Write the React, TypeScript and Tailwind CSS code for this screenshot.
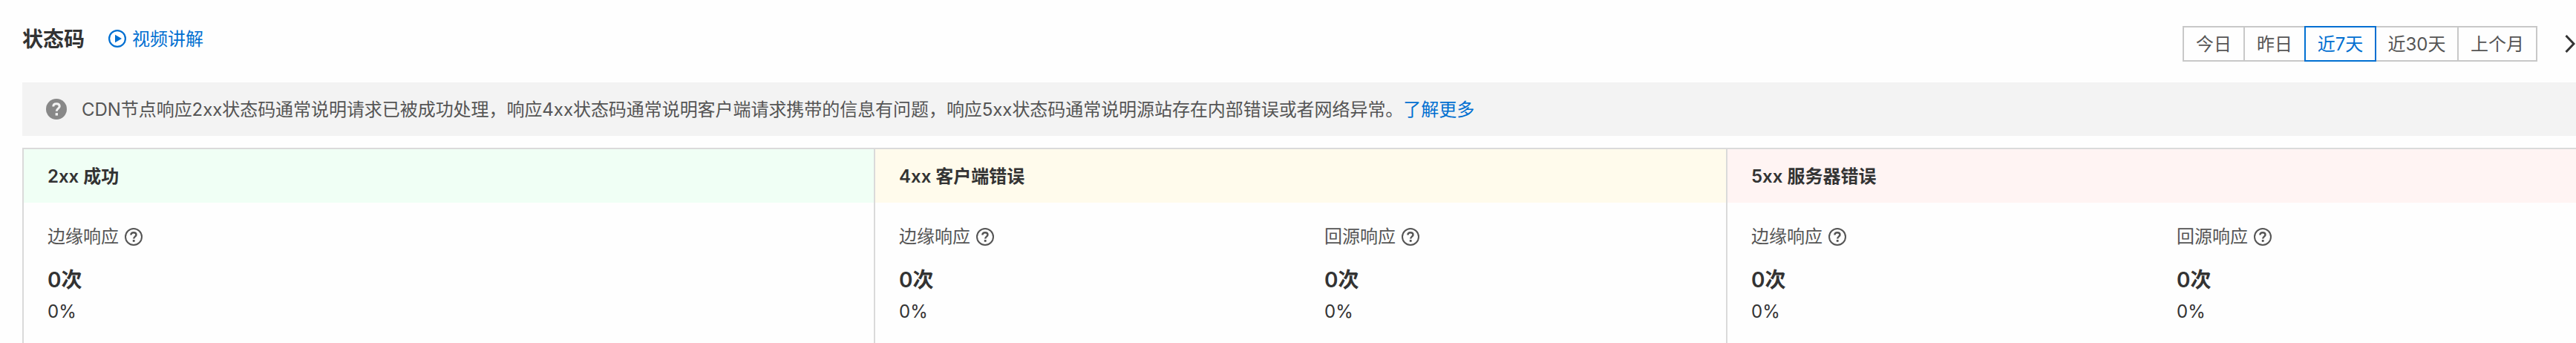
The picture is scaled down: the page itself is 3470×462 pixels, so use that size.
import clsx from 'clsx';

const ranges = [
  { label: '今日', width: 'w-[84px]' },
  { label: '昨日', width: 'w-[84px]' },
  { label: '近7天', width: 'w-[97px]', active: true },
  { label: '近30天', width: 'w-[113px]' },
  { label: '上个月', width: 'w-[108px]' },
];

const groups = [
  {
    title: '2xx 成功',
    header: 'bg-[#f0fff5]',
    width: 'w-[1147px]',
    items: [{ label: '边缘响应', count: 0, percent: 0 }],
  },
  {
    title: '4xx 客户端错误',
    header: 'bg-[#fffbec]',
    width: 'w-[1148px]',
    items: [
      { label: '边缘响应', count: 0, percent: 0 },
      { label: '回源响应', count: 0, percent: 0 },
    ],
  },
  {
    title: '5xx 服务器错误',
    header: 'bg-[#fff4f3]',
    width: 'w-[1148px]',
    items: [
      { label: '边缘响应', count: 0, percent: 0 },
      { label: '回源响应', count: 0, percent: 0 },
    ],
  },
];

function PlayIcon() {
  return (
    <svg viewBox="0 0 24 24" className="w-6 h-6 shrink-0" fill="none">
      <circle cx="12" cy="12" r="10.9" stroke="#006fd1" strokeWidth="2.2" />
      <path d="M9 6.8v10.4l9-5.2z" fill="#006fd1" />
    </svg>
  );
}

function HelpIcon() {
  return (
    <svg viewBox="0 0 24 24" className="w-6 h-6 shrink-0" fill="none" stroke="#555">
      <circle cx="12" cy="12" r="11" strokeWidth="2" />
      <path d="M8.4 9.6c0-2.1 1.5-3.4 3.6-3.4s3.5 1.2 3.5 3c0 2.3-3.3 2.5-3.3 5.3" strokeWidth="2.4" />
      <rect x="10.8" y="16" width="2.8" height="2.8" fill="#555" stroke="none" />
    </svg>
  );
}

function HelpSolidIcon() {
  return (
    <svg viewBox="0 0 28 28" className="w-7 h-7 shrink-0" fill="none">
      <circle cx="14" cy="14" r="14" fill="#888" />
      <path d="M9.8 10.6c0-2.4 1.8-3.8 4.3-3.8s4.1 1.4 4.1 3.5c0 2.8-4 3-4 6.5" stroke="#f3f3f3" strokeWidth="3" />
      <rect x="12.6" y="19.2" width="3.4" height="3.4" fill="#f3f3f3" />
    </svg>
  );
}

export default function App() {
  return (
    <div className="w-full h-[462px] overflow-hidden bg-[#fefefe] pl-[30px] text-2xl leading-9 text-[#333] whitespace-nowrap font-[Inter,'Noto_Sans_CJK_SC',sans-serif]">
      <div className="flex justify-between h-[111px]">
        <div className="flex items-center h-[104px]">
          <h2 className="pt-0.5 text-[28px] font-bold">状态码</h2>
          <a className="flex items-center gap-2 ml-8 text-[#006fd1]">
            <PlayIcon />
            <span className="pt-0.5">视频讲解</span>
          </a>
        </div>
        <div className="flex pt-[35px]">
          <div className="flex h-12">
            {ranges.map((r, i) => (
              <button
                key={r.label}
                className={clsx(
                  'flex items-center justify-center h-12 pt-0.5 border-2',
                  r.width,
                  i > 0 && '-ml-0.5',
                  r.active ? 'relative z-10 border-[#006fd1] text-[#006fd1]' : 'border-[#c8c8c8] text-[#555]',
                )}
              >
                {r.label}
              </button>
            ))}
          </div>
          <svg viewBox="0 0 14 24" className="w-3.5 h-6 mt-3 ml-[37px] mr-px" fill="none">
            <path d="M1.5 1l10.5 11L1.5 23" stroke="#333" strokeWidth="3" />
          </svg>
        </div>
      </div>

      <div className="flex items-center h-[72px] bg-[#f3f3f3] pl-8 text-[#555]">
        <HelpSolidIcon />
        <p className="ml-5 pt-0.5 tracking-[-0.05px]">
          CDN节点响应2xx状态码通常说明请求已被成功处理，响应4xx状态码通常说明客户端请求携带的信息有问题，响应5xx状态码通常说明源站存在内部错误或者网络异常。
          <a className="text-[#006fd1]">了解更多</a>
        </p>
      </div>

      <div className="flex w-[3445px] h-[300px] mt-4 border-t-2 border-[#dadada]">
        {groups.map((g) => (
          <div key={g.title} className={clsx('shrink-0 border-l-2 border-[#dadada]', g.width)}>
            <div className={clsx('flex items-center h-[72px] px-8 pt-0.5 font-semibold', g.header)}>{g.title}</div>
            <div className="flex">
              {g.items.map((item) => (
                <div key={item.label} className="flex-1 pl-8 pt-7">
                  <div className="flex items-center gap-2 h-9 text-[#555]">
                    {item.label}
                    <HelpIcon />
                  </div>
                  <div className="mt-5 text-[28px] leading-10 font-semibold">{item.count}次</div>
                  <div className="mt-[5px]">{item.percent}%</div>
                </div>
              ))}
            </div>
          </div>
        ))}
      </div>
    </div>
  );
}
